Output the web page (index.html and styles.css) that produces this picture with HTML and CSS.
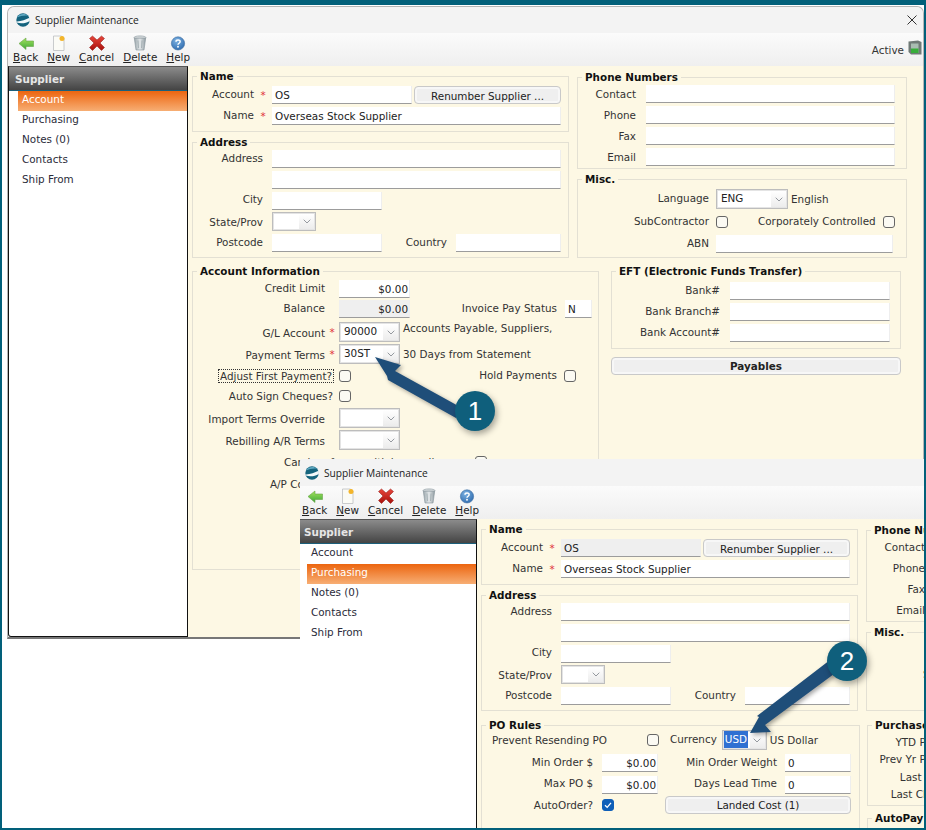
FILE: index.html
```html
<!doctype html>
<html lang="en">
<head>
    <meta charset="UTF-8">
    <title>Supplier Maintenance</title>
    <link rel="stylesheet" href="styles.css">
</head>
<body>

<svg class="defs" width="0" height="0">
    <defs>
        <linearGradient id="gBack" x1="0" y1="0" x2="0" y2="1"><stop offset="0" stop-color="#a4e35c"/><stop offset="1" stop-color="#3fa83a"/></linearGradient>
        <linearGradient id="gX" x1="0" y1="0" x2="0" y2="1"><stop offset="0" stop-color="#e8473c"/><stop offset="1" stop-color="#a8100c"/></linearGradient>
        <linearGradient id="gBin" x1="0" y1="0" x2="1" y2="0"><stop offset="0" stop-color="#9aa6ab"/><stop offset=".5" stop-color="#e4e8ea"/><stop offset="1" stop-color="#8e9aa0"/></linearGradient>
        <radialGradient id="gHelp" cx=".4" cy=".3" r=".8"><stop offset="0" stop-color="#7db2e2"/><stop offset="1" stop-color="#2a67ab"/></radialGradient>
        <symbol id="i-back" viewBox="0 0 16 16"><path d="M1 8.5 8 3V6H15.5V11.5H8V14.5Z" fill="url(#gBack)" stroke="#6aa548" stroke-width=".6"/></symbol>
        <symbol id="i-new" viewBox="0 0 16 16"><path d="M2.5 1H10.5L13 3.5V15.5H2.5Z" fill="#fbfbf6" stroke="#bdbfc2" stroke-width=".8"/><circle cx="11" cy="3.6" r="2.5" fill="#f3b52b"/></symbol>
        <symbol id="i-cancel" viewBox="0 0 16 16"><path d="M3.5 1 8 5 12.5 1 15.5 3.5 11 8 15.5 12.5 12.5 15.5 8 11 3.5 15.5 .5 12.5 5 8 .5 3.5Z" fill="url(#gX)" stroke="#8d1410" stroke-width=".5"/></symbol>
        <symbol id="i-delete" viewBox="0 0 16 16"><ellipse cx="8" cy="2.6" rx="6" ry="1.7" fill="#d2d8db" stroke="#87939a" stroke-width=".6"/><path d="M2.3 3.2 4 15H12L13.7 3.2Z" fill="url(#gBin)" stroke="#87939a" stroke-width=".6"/><path d="M6 5.5 6.5 13M10 5.5 9.5 13" stroke="#97a3a8" stroke-width=".7"/></symbol>
        <symbol id="i-help" viewBox="0 0 16 16"><circle cx="8" cy="8.4" r="6.6" fill="url(#gHelp)" stroke="#3a6c9f" stroke-width=".6"/><path d="M6 6.7C6.1 4.4 10.2 4.4 10.1 6.8 10.1 8.3 8 8.2 8 9.8" fill="none" stroke="#fff" stroke-width="1.5"/><circle cx="8" cy="11.8" r=".95" fill="#fff"/></symbol>
        <symbol id="i-logo" viewBox="0 0 14 14"><circle cx="7" cy="7" r="6.7" fill="#14637e"/><path d="M1 4.5C3 .6 9 .2 12 2.6 8 2.2 4 3 1 4.5Z" fill="#5fa9c2"/><path d="M.4 8.4C5 8.6 9.6 6.8 13.6 4.8 14 6 14 7 13.8 8 10 10.4 5 11 .8 9.6Z" fill="#f2f8fa"/></symbol>
        <symbol id="i-active" viewBox="0 0 14 15"><path d="M.5 1.5 10 .5 13.5 2V14.5H3L.5 12Z" fill="#6f7a76"/><path d="M3 3.5H10.5V13H3Z" fill="#a9bdb2"/><path d="M3 8.5H10.5V13H3Z" fill="#37ad3a"/></symbol>
        <symbol id="i-down" viewBox="0 0 8 5"><path d="M.7 .7 4 4 7.3 .7" fill="none" stroke="#8a8f95" stroke-width=".9"/></symbol>
        <symbol id="i-tick" viewBox="0 0 10 10"><path d="M2 5.2 4.2 7.4 8 2.8" fill="none" stroke="#fff" stroke-width="1.3"/></symbol>
        <symbol id="i-close" viewBox="0 0 10 10"><path d="M.5 .5 9.5 9.5M9.5 .5 .5 9.5" fill="none" stroke="#333" stroke-width="1"/></symbol>
    </defs>
</svg>

<div class="screen">

    <!-- first window -->
    <div class="window window-back">
        <div class="titlebar">
            <svg class="logo"><use href="#i-logo"/></svg>
            <span class="title">Supplier Maintenance</span>
            <svg class="close"><use href="#i-close"/></svg>
        </div>
        <div class="toolbar">
            <div class="tool"><svg class="tool-icon"><use href="#i-back"/></svg><span><u>B</u>ack</span></div>
            <div class="tool"><svg class="tool-icon"><use href="#i-new"/></svg><span><u>N</u>ew</span></div>
            <div class="tool"><svg class="tool-icon"><use href="#i-cancel"/></svg><span><u>C</u>ancel</span></div>
            <div class="tool"><svg class="tool-icon"><use href="#i-delete"/></svg><span><u>D</u>elete</span></div>
            <div class="tool"><svg class="tool-icon"><use href="#i-help"/></svg><span><u>H</u>elp</span></div>
            <div class="active-flag">Active <svg class="active-icon"><use href="#i-active"/></svg></div>
        </div>
        <div class="win-body">
            <div class="sidebar">
                <div class="side-head">Supplier</div>
                <div class="side-item side-on">Account</div>
                <div class="side-item">Purchasing</div>
                <div class="side-item">Notes (0)</div>
                <div class="side-item">Contacts</div>
                <div class="side-item">Ship From</div>
            </div>
            <div class="content">
                <div class="top">
                    <div class="col-left">
                        <fieldset class="box name-box">
                            <legend>Name</legend>
                            <div class="row"><span class="lbl">Account</span><span class="star">*</span><div class="input w140">OS</div><div class="btn renumber">Renumber Supplier ...</div></div>
                            <div class="row"><span class="lbl">Name</span><span class="star">*</span><div class="input grow">Overseas Stock Supplier</div></div>
                        </fieldset>
                        <fieldset class="box addr-box">
                            <legend>Address</legend>
                            <div class="row"><span class="lbl">Address</span><div class="input grow"></div></div>
                            <div class="row"><span class="lbl"></span><div class="input grow"></div></div>
                            <div class="row row-tight"><span class="lbl">City</span><div class="input w110"></div></div>
                            <div class="row row-combo"><span class="lbl">State/Prov</span><div class="combo w44"><span class="combo-val"></span><span class="combo-btn"><svg class="chev"><use href="#i-down"/></svg></span></div></div>
                            <div class="row"><span class="lbl">Postcode</span><div class="input w110"></div><span class="lbl-country">Country</span><div class="input grow"></div></div>
                        </fieldset>
                    </div>
                    <div class="col-right">
                        <fieldset class="box phone-box">
                            <legend>Phone Numbers</legend>
                            <div class="row"><span class="lbl">Contact</span><div class="input grow"></div></div>
                            <div class="row"><span class="lbl">Phone</span><div class="input grow"></div></div>
                            <div class="row"><span class="lbl">Fax</span><div class="input grow"></div></div>
                            <div class="row"><span class="lbl">Email</span><div class="input grow"></div></div>
                        </fieldset>
                        <fieldset class="box misc-box">
                            <legend>Misc.</legend>
                            <div class="row row-combo"><span class="lbl">Language</span><div class="combo w72"><span class="combo-val">ENG</span><span class="combo-btn"><svg class="chev"><use href="#i-down"/></svg></span></div><span class="after">English</span></div>
                            <div class="row row-combo"><span class="lbl">SubContractor</span><span class="check"></span><span class="lbl-corp">Corporately Controlled</span><span class="check"></span></div>
                            <div class="row"><span class="lbl">ABN</span><div class="input grow"></div></div>
                        </fieldset>
                    </div>
                </div>
                <div class="bottom">
                    <fieldset class="box acct-box">
                        <legend>Account Information</legend>
                        <div class="row"><span class="lbl">Credit Limit</span><div class="input w71 num">$0.00</div></div>
                        <div class="row row-wide"><span class="lbl">Balance</span><div class="input w71 num off">$0.00</div><span class="lbl-pay">Invoice Pay Status</span><div class="input w27">N</div></div>
                        <div class="row row-combo"><span class="lbl">G/L Account</span><span class="star">*</span><div class="combo w61"><span class="combo-val">90000</span><span class="combo-btn"><svg class="chev"><use href="#i-down"/></svg></span></div><span class="after after-up">Accounts Payable, Suppliers,</span></div>
                        <div class="row row-combo"><span class="lbl">Payment Terms</span><span class="star">*</span><div class="combo w61"><span class="combo-val">30ST</span><span class="combo-btn"><svg class="chev"><use href="#i-down"/></svg></span></div><span class="after">30 Days from Statement</span></div>
                        <div class="row row-combo row-flush"><span class="lbl-long"><span class="focused">Adjust First Payment?</span></span><span class="check"></span><span class="lbl-hold">Hold Payments</span><span class="check"></span></div>
                        <div class="row row-combo"><span class="lbl-long">Auto Sign Cheques?</span><span class="check"></span></div>
                        <div class="row row-combo"><span class="lbl">Import Terms Override</span><div class="combo w61"><span class="combo-val"></span><span class="combo-btn"><svg class="chev"><use href="#i-down"/></svg></span></div></div>
                        <div class="row row-combo"><span class="lbl">Rebilling A/R Terms</span><div class="combo w61"><span class="combo-val"></span><span class="combo-btn"><svg class="chev"><use href="#i-down"/></svg></span></div></div>
                        <div class="row row-combo"><span class="lbl-free">Can buy from multiple suppliers</span><span class="check"></span></div>
                        <div class="row row-combo"><span class="lbl-ap">A/P Contact</span></div>
                    </fieldset>
                    <div class="col-eft">
                        <fieldset class="box eft-box">
                            <legend>EFT (Electronic Funds Transfer)</legend>
                            <div class="row"><span class="lbl">Bank#</span><div class="input grow"></div></div>
                            <div class="row"><span class="lbl">Bank Branch#</span><div class="input grow"></div></div>
                            <div class="row"><span class="lbl">Bank Account#</span><div class="input grow"></div></div>
                        </fieldset>
                        <div class="btn payables">Payables</div>
                    </div>
                </div>
            </div>
        </div>
    </div>

    <!-- second window, lies over the first one -->
    <div class="window window-front">
        <div class="titlebar">
            <svg class="logo"><use href="#i-logo"/></svg>
            <span class="title">Supplier Maintenance</span>
        </div>
        <div class="toolbar">
            <div class="tool"><svg class="tool-icon"><use href="#i-back"/></svg><span><u>B</u>ack</span></div>
            <div class="tool"><svg class="tool-icon"><use href="#i-new"/></svg><span><u>N</u>ew</span></div>
            <div class="tool"><svg class="tool-icon"><use href="#i-cancel"/></svg><span><u>C</u>ancel</span></div>
            <div class="tool"><svg class="tool-icon"><use href="#i-delete"/></svg><span><u>D</u>elete</span></div>
            <div class="tool"><svg class="tool-icon"><use href="#i-help"/></svg><span><u>H</u>elp</span></div>
        </div>
        <div class="win-body">
            <div class="sidebar">
                <div class="side-head">Supplier</div>
                <div class="side-item">Account</div>
                <div class="side-item side-on">Purchasing</div>
                <div class="side-item">Notes (0)</div>
                <div class="side-item">Contacts</div>
                <div class="side-item">Ship From</div>
            </div>
            <div class="content">
                <div class="top">
                    <div class="col-left">
                        <fieldset class="box name-box">
                            <legend>Name</legend>
                            <div class="row"><span class="lbl">Account</span><span class="star">*</span><div class="input w140 off">OS</div><div class="btn renumber">Renumber Supplier ...</div></div>
                            <div class="row"><span class="lbl">Name</span><span class="star">*</span><div class="input grow">Overseas Stock Supplier</div></div>
                        </fieldset>
                        <fieldset class="box addr-box">
                            <legend>Address</legend>
                            <div class="row"><span class="lbl">Address</span><div class="input grow"></div></div>
                            <div class="row"><span class="lbl"></span><div class="input grow"></div></div>
                            <div class="row row-tight"><span class="lbl">City</span><div class="input w110"></div></div>
                            <div class="row row-combo"><span class="lbl">State/Prov</span><div class="combo w44"><span class="combo-val"></span><span class="combo-btn"><svg class="chev"><use href="#i-down"/></svg></span></div></div>
                            <div class="row"><span class="lbl">Postcode</span><div class="input w110"></div><span class="lbl-country">Country</span><div class="input grow"></div></div>
                        </fieldset>
                    </div>
                    <div class="col-right">
                        <fieldset class="box phone-box">
                            <legend>Phone Numbers</legend>
                            <div class="row"><span class="lbl">Contact</span><div class="input grow"></div></div>
                            <div class="row"><span class="lbl">Phone</span><div class="input grow"></div></div>
                            <div class="row"><span class="lbl">Fax</span><div class="input grow"></div></div>
                            <div class="row"><span class="lbl">Email</span><div class="input grow"></div></div>
                        </fieldset>
                        <fieldset class="box misc-box">
                            <legend>Misc.</legend>
                            <div class="row row-combo"><span class="lbl">Language</span></div>
                            <div class="row row-combo"><span class="lbl">SubContractor</span></div>
                            <div class="row"><span class="lbl">ABN</span></div>
                        </fieldset>
                    </div>
                </div>
                <div class="bottom bottom-po">
                    <fieldset class="box po-box">
                        <legend>PO Rules</legend>
                        <div class="row row-combo po-first"><span class="lbl-resend">Prevent Resending PO</span><span class="check"></span><span class="lbl-cur">Currency</span><div class="combo w45"><span class="combo-val"><span class="picked">USD</span></span><span class="combo-btn"><svg class="chev"><use href="#i-down"/></svg></span></div><span class="after">US Dollar</span></div>
                        <div class="row"><span class="lbl">Min Order $</span><div class="input w56 num">$0.00</div><span class="lbl-r">Min Order Weight</span><div class="input w66">0</div></div>
                        <div class="row row-up"><span class="lbl">Max PO $</span><div class="input w56 num">$0.00</div><span class="lbl-r">Days Lead Time</span><div class="input w66">0</div></div>
                        <div class="row row-last"><span class="lbl">AutoOrder?</span><span class="check check-on"><svg class="tick"><use href="#i-tick"/></svg></span><div class="btn landed">Landed Cost (1)</div></div>
                    </fieldset>
                    <div class="col-purch">
                        <fieldset class="box purch-box">
                            <legend>Purchases</legend>
                            <div class="row-text">YTD Purchases</div>
                            <div class="row-text">Prev Yr Purchases</div>
                            <div class="row-text">Last Purchase</div>
                            <div class="row-text">Last Change By</div>
                        </fieldset>
                        <fieldset class="box autopay-box">
                            <legend>AutoPay</legend>
                        </fieldset>
                    </div>
                </div>
            </div>
        </div>
    </div>

    <!-- numbered callouts -->
    <svg class="callouts" width="926" height="830" viewBox="0 0 926 830">
        <path class="arrow" d="M375 357 401 365 395 371 462 408 456 418 388 380 387 376Z"/>
        <circle class="bubble" cx="475" cy="411" r="20"/>
        <text class="bubble-num" x="475" y="420">1</text>
        <path class="arrow" d="M750 733 771 732 765 725 838 671 830 660 757 716 759 717Z"/>
        <circle class="bubble" cx="847" cy="661" r="20"/>
        <text class="bubble-num" x="847" y="670">2</text>
    </svg>
</div>

</body>
</html>
```

FILE: styles.css
```css
*{
    box-sizing: border-box;
}
body{
    margin: 0;
    background: #fff;
    font-family: "DejaVu Sans", sans-serif;
    font-size: 10.4px;
    color: #333;
}
.defs{
    position: absolute;
}
.screen{
    position: relative;
    width: 926px;
    height: 830px;
    overflow: hidden;
    background: #fff;
    border: solid #02607a;
    border-width: 5px 2px 2px 2px;
}

/* windows */
.window{
    position: absolute;
    width: 917px;
    height: 633px;
    display: flex;
    flex-direction: column;
    background: #f3f3f3;
    border: 1px solid #b5b5b5;
    border-radius: 7px 7px 0 0;
}
.window-back{
    left: 5px;
    top: 1px;
    border-bottom: 2px solid #777;
}
.window-front{
    left: 294px;
    top: 454px;
    border-color: #f3f3f3;
    clip-path: inset(0 0 0 4px);
}
.titlebar{
    height: 26px;
    flex: none;
    display: flex;
    align-items: center;
    padding-left: 8px;
    background: #f3f3f3;
    border-radius: 7px 7px 0 0;
}
.logo{
    width: 14px;
    height: 14px;
}
.title{
    margin-left: 5px;
    font-family: "Open Sans", sans-serif;
    font-size: 10.2px;
    color: #222;
}
.close{
    margin-left: auto;
    margin-right: 6px;
    width: 10px;
    height: 10px;
}
.toolbar{
    height: 33px;
    flex: none;
    display: flex;
    align-items: flex-start;
    padding-left: 5px;
    gap: 9px;
    background: linear-gradient(#fbfbfb, #efefef);
}
.tool{
    display: flex;
    flex-direction: column;
    align-items: center;
    padding-top: 2px;
}
.tool-icon{
    width: 16px;
    height: 16px;
}
.tool span{
    line-height: 13px;
    color: #222;
}
.active-flag{
    margin-left: auto;
    margin-right: 1px;
    display: flex;
    align-items: center;
    gap: 4px;
    height: 30px;
    padding-top: 3px;
}
.active-icon{
    width: 14px;
    height: 15px;
    margin-bottom: 4px;
}
.win-body{
    flex: 1;
    display: flex;
    min-height: 0;
}

/* side menu */
.sidebar{
    width: 180px;
    flex: none;
    background: #fff;
    border: 1px solid #111;
    border-top-color: #555;
    border-radius: 0 0 0 3px;
}
.side-head{
    height: 24px;
    line-height: 25px;
    padding-left: 6px;
    font-weight: bold;
    color: #e6e6e6;
    background: linear-gradient(#8b8b8b, #444);
    border-bottom: 1px solid #1c5f7a;
}
.side-item{
    height: 20px;
    line-height: 16px;
    margin-left: 9px;
    padding-left: 4px;
    color: #2b2b3a;
}
.side-on{
    color: #fff;
    background: linear-gradient(#ec650f, #f7ae74);
}

/* form area */
.content{
    flex: 1;
    padding: 4px 0 0 4px;
    background: #fdf8e4;
}
.top, .bottom{
    display: flex;
}
.top{
    gap: 8px;
}
.bottom{
    margin-top: 7px;
}
.bottom-po{
    margin-top: 8px;
}
.col-left{
    width: 377px;
    flex: none;
}
.col-right{
    width: 330px;
    flex: none;
    padding-top: 1px;
}
.box{
    margin: 0;
    min-width: 0;
    padding: 0 7px 0 7px;
    border: 1px solid #e3e0d3;
}
.box legend{
    margin-left: -3px;
    padding: 0 3px;
    line-height: 13px;
    font-weight: bold;
    color: #111;
}
.row{
    display: flex;
    align-items: center;
    height: 18px;
    margin-bottom: 3px;
}
.row-combo{
    height: 20px;
}
.row-tight{
    margin-bottom: 2px;
}
.lbl, .lbl-long, .lbl-r{
    flex: none;
    text-align: right;
    white-space: nowrap;
    padding-bottom: 2px;
}
.star{
    flex: none;
    text-align: center;
    color: #e0303a;
}
.input{
    flex: none;
    height: 18px;
    line-height: 19px;
    padding: 0 3px;
    background: #fff;
    border-bottom: 1px solid #9c9c9c;
    border-right: 1px solid #eee;
    color: #222;
    white-space: nowrap;
}
.grow{
    flex: 1;
}
.num{
    text-align: right;
    padding-right: 1px;
}
.off{
    background: #efefef;
}
.w27{ width: 27px; }
.w56{ width: 56px; }
.w66{ width: 66px; }
.w71{ width: 71px; }
.w110{ width: 110px; }
.w140{ width: 140px; }
.w44{ width: 44px; }
.w45{ width: 45px; }
.w61{ width: 61px; }
.w72{ width: 72px; }
.combo{
    flex: none;
    height: 20px;
    display: flex;
    background: #fff;
    border: 1px solid #bdbdbd;
    box-shadow: inset 0 0 0 1px #e4e4e4;
}
.combo-val{
    flex: 1;
    line-height: 17px;
    padding: 0 0 0 4px;
    color: #222;
}
.combo-btn{
    width: 15px;
    flex: none;
    margin: 1px;
    display: flex;
    align-items: center;
    justify-content: center;
    background: linear-gradient(#fff, #ececec);
}
.chev{
    width: 8px;
    height: 5px;
}
.picked{
    display: inline-block;
    margin-left: -3px;
    padding: 0 1px;
    color: #fff;
    background: #2f70d2;
}
.after{
    margin-left: 3px;
    white-space: nowrap;
}
.after-up{
    margin-bottom: 8px;
}
.check{
    flex: none;
    width: 12px;
    height: 12px;
    background: #fbfaf3;
    border: 1px solid #666;
    border-radius: 3px;
}
.check-on{
    background: #0f5fb8;
    border-color: #0f5fb8;
}
.tick{
    display: block;
    width: 10px;
    height: 10px;
}
.btn{
    flex: none;
    text-align: center;
    color: #222;
    background: #efefef;
    border: 1px solid #c9c9c9;
    box-shadow: inset 0 0 0 2px #f7f7f7;
    border-radius: 4px;
}
.renumber{
    width: 147px;
    height: 18px;
    line-height: 18px;
    margin-left: 2px;
}

/* Name */
.name-box{
    height: 62px;
    padding-right: 7px;
}
.name-box legend{
    margin-bottom: 3px;
}
.name-box .lbl{
    width: 54px;
}
.name-box .star{
    width: 18px;
}

/* Address */
.addr-box{
    height: 122px;
    margin-top: 4px;
}
.addr-box legend{
    margin-bottom: 1px;
}
.addr-box .lbl{
    width: 63px;
    margin-right: 9px;
}
.addr-box .row-tight .lbl{
    padding-bottom: 4px;
}
.addr-box .row-combo{
    height: 19px;
    margin-bottom: 3px;
}
.addr-box .combo{
    height: 19px;
}
.addr-box .row-combo .lbl{
    padding-bottom: 0;
}
.lbl-country{
    width: 65px;
    margin-right: 9px;
    padding-bottom: 2px;
    text-align: right;
}

/* Phone */
.phone-box{
    height: 98px;
    padding-right: 11px;
}
.phone-box legend{
    margin-bottom: 1px;
}
.phone-box .lbl{
    width: 51px;
    margin-right: 10px;
    padding-bottom: 1px;
}
.misc-box{
    height: 85px;
    margin-top: 4px;
    padding-right: 13px;
}
.misc-box legend{
    margin-bottom: 3px;
}
.misc-box .lbl{
    width: 124px;
    margin-right: 7px;
}
.lbl-corp{
    width: 117px;
    margin-left: 30px;
    margin-right: 8px;
    padding-bottom: 2px;
    text-align: right;
    white-space: nowrap;
}

/* Account Information */
.acct-box{
    width: 407px;
    flex: none;
    height: 305px;
}
.acct-box legend{
    margin-bottom: 2px;
}
.acct-box .row{
    margin-bottom: 2px;
}
.acct-box .row-wide{
    margin-bottom: 4px;
    margin-right: -1px;
}
.acct-box .row-flush{
    margin-bottom: 0;
}
.acct-box .lbl{
    width: 125px;
    margin-right: 14px;
}
.acct-box .row-combo .lbl{
    padding-top: 1px;
    padding-bottom: 0;
}
.acct-box .star{
    width: 14px;
}
.acct-box .lbl + .star{
    margin-left: -14px;
}
.lbl-long{
    width: 133px;
    margin-right: 6px;
    padding-bottom: 0;
}
.focused{
    padding: 0 1px;
    outline: 1px dotted #333;
}
.lbl-pay{
    margin-left: auto;
    margin-right: 8px;
    padding-bottom: 2px;
    white-space: nowrap;
}
.lbl-hold{
    margin-left: auto;
    margin-right: 7px;
    padding-bottom: 2px;
    white-space: nowrap;
}
.acct-box .lbl-hold + .check{
    margin-right: 15px;
}
.lbl-free{
    width: 191px;
    margin-left: 84px;
    white-space: nowrap;
}
.lbl-ap{
    margin-left: 70px;
    white-space: nowrap;
}

/* EFT */
.col-eft{
    width: 290px;
    flex: none;
    margin-left: 12px;
}
.eft-box{
    height: 84px;
    padding-right: 10px;
}
.eft-box legend{
    margin-bottom: 4px;
}
.eft-box .lbl{
    width: 101px;
    margin-right: 10px;
}
.payables{
    height: 18px;
    line-height: 16px;
    margin-top: 8px;
    font-weight: bold;
}

/* PO Rules */
.po-box{
    width: 379px;
    flex: none;
    height: 140px;
    padding-right: 8px;
}
.po-box legend{
    margin-bottom: -2px;
}
.po-first{
    margin-bottom: 4px;
}
.po-box .row{
    margin-bottom: 4px;
}
.po-box .lbl{
    width: 104px;
    margin-right: 9px;
}
.lbl-resend{
    width: 158px;
    padding-left: 3px;
    white-space: nowrap;
}
.lbl-cur{
    margin-left: 11px;
    margin-right: 5px;
    padding-bottom: 2px;
}
.lbl-r{
    width: 119px;
    margin-right: 8px;
}
.po-box .row-up .lbl, .po-box .row-up .lbl-r{
    padding-bottom: 4px;
}
.po-box .row-last{
    margin-top: -2px;
}
.po-box .row-last .lbl{
    padding-bottom: 0;
}
.landed{
    width: 186px;
    height: 18px;
    line-height: 16px;
    margin-left: auto;
}
.col-purch{
    width: 330px;
    flex: none;
    margin-left: 7px;
}
.purch-box{
    height: 87px;
}
.purch-box legend{
    margin-bottom: 2px;
}
.row-text{
    width: 97px;
    height: 17.3px;
    line-height: 17px;
    text-align: right;
    white-space: nowrap;
}
.autopay-box{
    height: 60px;
    margin-top: 6px;
}

/* callouts */
.callouts{
    position: absolute;
    left: -2px;
    top: -5px;
}
.arrow{
    fill: #1f4e79;
    filter: drop-shadow(2px 2px 2px rgba(0,0,0,.35));
}
.bubble{
    fill: #0f5f7c;
    filter: drop-shadow(2px 3px 3px rgba(0,0,0,.35));
}
.bubble-num{
    font-family: "Liberation Sans", sans-serif;
    font-size: 26px;
    fill: #fff;
    text-anchor: middle;
}
```
